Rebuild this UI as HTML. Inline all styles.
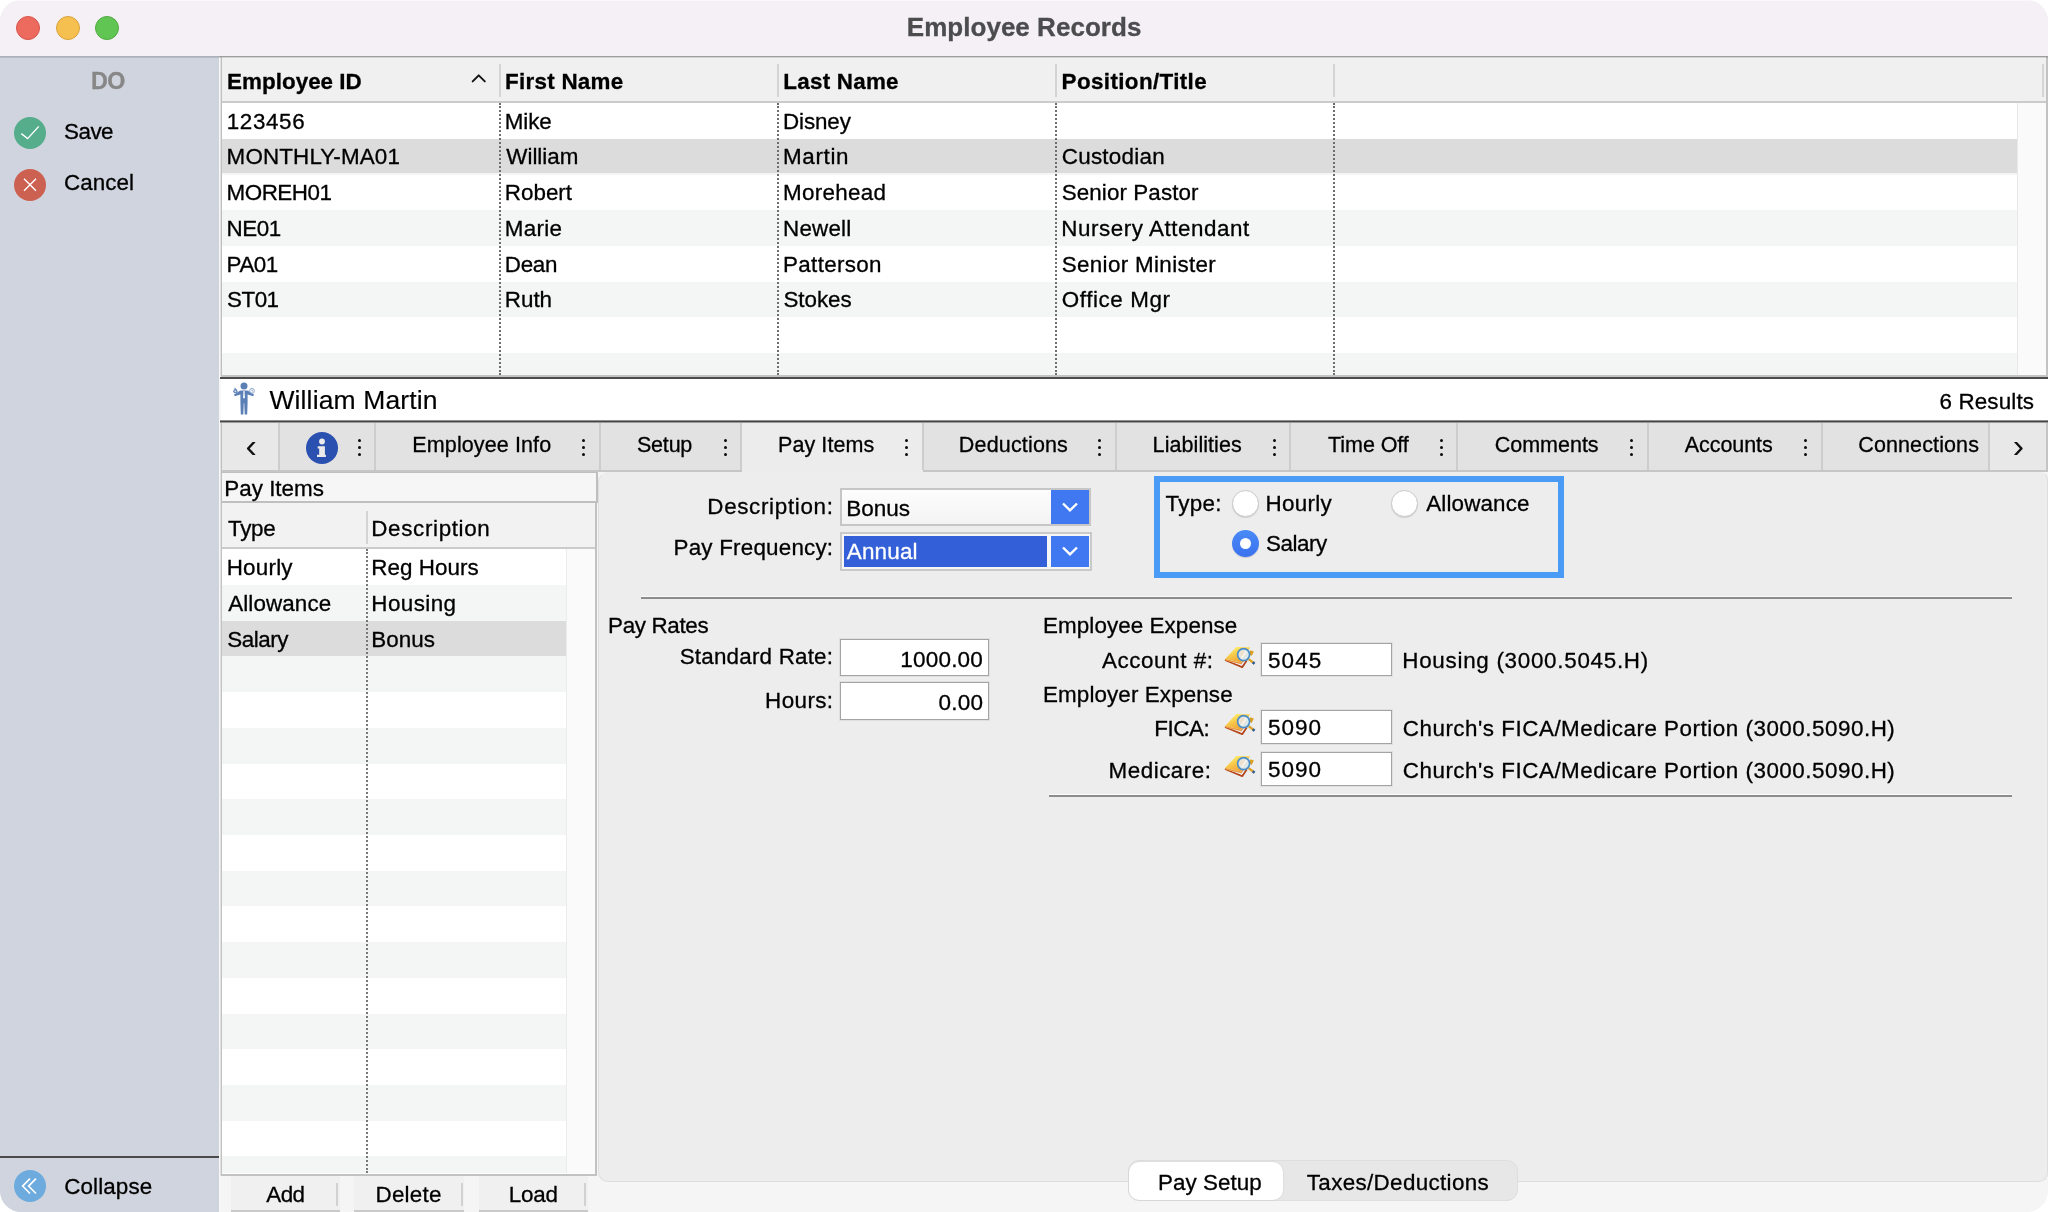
<!DOCTYPE html>
<html><head><meta charset="utf-8"><title>Employee Records</title>
<style>
html,body{margin:0;padding:0;}
body{width:2048px;height:1212px;background:#fff;overflow:hidden;font-family:"Liberation Sans",sans-serif;color:#000;}
.win{will-change:transform;position:absolute;left:0;top:0;width:2048px;height:1212px;border-radius:21px;overflow:hidden;background:#f5f5f5;}
.a{position:absolute;}
.t{position:absolute;line-height:1;white-space:pre;-webkit-text-stroke:0.3px currentColor;}
.tl{position:absolute;width:24px;height:24px;border-radius:50%;top:15.8px;box-sizing:border-box;}
.row{position:absolute;left:222px;width:1795px;}
.vd{position:absolute;width:0;border-left:2px dotted #6e6e6e;}
.hs{position:absolute;width:2px;background:#d4d4d4;}
.tabsep{position:absolute;top:423px;width:2px;height:47px;background:#cdcdcd;}
.dots{position:absolute;width:3.2px;height:3.2px;border-radius:50%;background:#0a0a0a;}
.inp{position:absolute;background:#fff;border:1px solid #a4a4a4;box-sizing:border-box;box-shadow:0 0 0 1px rgba(0,0,0,.06);}
.prow{position:absolute;left:222px;width:344px;}
</style></head><body>
<div class="win">
<!-- title bar -->
<div class="a" style="left:0;top:0;width:2048px;height:56px;background:#f5f0f6;"></div>
<div class="a" style="left:0;top:0;width:2048px;height:1px;background:#faf8fb;"></div>
<div class="a" style="left:0;top:56px;width:2048px;height:1px;background:#9e9e9e;"></div>
<div class="tl" style="left:16px;background:#ed6a5e;border:1px solid #d8544b;"></div>
<div class="tl" style="left:55.6px;background:#f5c04f;border:1px solid #d9a33a;"></div>
<div class="tl" style="left:95px;background:#61c554;border:1px solid #51a941;"></div>
<!-- sidebar -->
<div class="a" style="left:0;top:57px;width:219px;height:1155px;background:#d0d4de;"></div>
<div class="a" style="left:0;top:56px;width:219px;height:1px;background:#aab0bb;"></div>
<div class="a" style="left:219px;top:57px;width:2px;height:1155px;background:#f7f7f8;"></div>
<div class="a" style="left:0;top:1156px;width:219px;height:2px;background:#4a4a4a;"></div>
<svg class="a" style="left:14px;top:117px" width="32" height="32" viewBox="0 0 32 32"><circle cx="16" cy="16" r="16" fill="#55ad8c"/><path d="M7.3 16.6 L13.6 21.6 L24.8 9.4" fill="none" stroke="#fff" stroke-width="1.4"/></svg>
<svg class="a" style="left:14px;top:168.7px" width="32" height="32" viewBox="0 0 32 32"><circle cx="16" cy="16" r="16" fill="#cc6152"/><path d="M10 9.8 L22 21.8 M22 9.8 L10 21.8" fill="none" stroke="#fff" stroke-width="1.4"/></svg>
<svg class="a" style="left:14px;top:1170px" width="32" height="32" viewBox="0 0 32 32"><circle cx="16" cy="16" r="16" fill="#6dabdf"/><path d="M16 8.6 L8.6 16.1 L16 23.5 M22 8.6 L14.6 16.1 L22 23.5" fill="none" stroke="#fff" stroke-width="1.6"/></svg>

<!-- main table -->
<div class="a" style="left:221px;top:57px;width:1827px;height:319px;background:#fff;"></div>
<div class="a" style="left:220px;top:57px;width:1px;height:319px;background:#e2e2e2;"></div><div class="a" style="left:221px;top:57px;width:1px;height:319px;background:#c0c0c0;"></div>
<div class="a" style="left:222px;top:57px;width:1824px;height:44px;background:#f0f0f0;"></div>
<div class="a" style="left:222px;top:101px;width:1824px;height:2px;background:#cbcbcb;"></div>
<div class="a" style="left:2046px;top:57px;width:2px;height:320px;background:#c2c2c2;"></div>
<!-- rows -->
<div class="row" style="top:139px;height:36px;background:#f4f5f5;"></div>
<div class="row" style="top:139px;height:34px;background:#dcdcdc;"></div>
<div class="row" style="top:210px;height:36px;background:#f4f5f5;"></div>
<div class="row" style="top:282px;height:35px;background:#f4f5f5;"></div>
<div class="row" style="top:353px;height:22px;background:#f4f5f5;"></div>
<!-- scrollbar track -->
<div class="a" style="left:2017px;top:103px;width:29px;height:272px;background:#fafafa;"></div>
<div class="a" style="left:2017px;top:103px;width:1px;height:272px;background:#e8e8e8;"></div>
<!-- header separators -->
<div class="hs" style="left:499px;top:64px;height:33px;"></div>
<div class="hs" style="left:777px;top:64px;height:33px;"></div>
<div class="hs" style="left:1055px;top:64px;height:33px;"></div>
<div class="hs" style="left:1333px;top:64px;height:33px;"></div>
<div class="hs" style="left:2042px;top:64px;height:33px;"></div>
<!-- dotted col lines -->
<div class="vd" style="left:499px;top:103px;height:272px;"></div>
<div class="vd" style="left:777px;top:103px;height:272px;"></div>
<div class="vd" style="left:1055px;top:103px;height:272px;"></div>
<div class="vd" style="left:1333px;top:103px;height:272px;"></div>
<!-- sort arrow -->
<svg class="a" style="left:470px;top:72.4px" width="18" height="12" viewBox="0 0 18 12"><path d="M2.7 9.4 L8.7 3.4 L14.8 9.4" fill="none" stroke="#141414" stroke-width="2" stroke-linecap="round" stroke-linejoin="round"/></svg>
<!-- table bottom line -->
<div class="a" style="left:221px;top:375px;width:1827px;height:2px;background:#c4c4c4;"></div>
<div class="a" style="left:220px;top:377px;width:1828px;height:2px;background:#4c4c4c;"></div>
<!-- name bar -->
<div class="a" style="left:221px;top:379px;width:1827px;height:42px;background:#fff;"></div>
<div class="a" style="left:220px;top:420px;width:1828px;height:1px;background:#8f8f8f;"></div>
<div class="a" style="left:220px;top:421px;width:1828px;height:1px;background:#454545;"></div>
<div class="a" style="left:220px;top:422px;width:1828px;height:1px;background:#9a9a9a;"></div>
<!-- person icon -->
<svg class="a" style="left:231px;top:381px" width="26" height="36" viewBox="0 0 26 36">
<circle cx="13" cy="5" r="3.5" fill="#5c80b6"/>
<path d="M10 9.6 H16 Q17.2 9.6 18.6 10.8 L23 13.6 L22.2 15.2 L16.6 13.4 V21 L16.2 33.6 H13.7 L13.2 22 H12.8 L12.3 33.6 H9.8 L9.4 21 V13.4 L3.8 15.2 L3 13.6 L7.4 10.8 Q8.8 9.6 10 9.6Z" fill="#5c80b6"/>
<path d="M12.4 10 H13.6 L14 16.4 L13 17.8 L12 16.4Z" fill="#e8eef6"/>
<circle cx="4.4" cy="10.2" r="2.1" fill="#5c80b6"/><circle cx="4.4" cy="10.2" r="1" fill="#cfd9ea"/>
<path d="M3.4 7.2 L5.4 8.4" stroke="#5c80b6" stroke-width="1"/>
<circle cx="21" cy="9.8" r="2.4" fill="#eef2f8" stroke="#8ea6cc" stroke-width="0.9"/>
<path d="M21 8.6 V9.9 H22" stroke="#8ea6cc" stroke-width="0.7" fill="none"/>
</svg>
<!-- tab bar -->
<div class="a" style="left:221px;top:423px;width:1827px;height:47px;background:#e2e2e2;"></div>
<div class="a" style="left:221px;top:470px;width:1827px;height:2px;background:#c6c6c6;"></div>
<div class="a" style="left:221px;top:423px;width:58px;height:47px;background:#e8e8e8;"></div>
<div class="a" style="left:1990px;top:423px;width:56px;height:47px;background:#e8e8e8;"></div>
<div class="a" style="left:742px;top:423px;width:181px;height:49px;background:#ececec;"></div>
<div class="tabsep" style="left:278px;"></div>
<div class="tabsep" style="left:374px;"></div>
<div class="tabsep" style="left:599px;"></div>
<div class="tabsep" style="left:740px;"></div>
<div class="tabsep" style="left:922px;"></div>
<div class="tabsep" style="left:1115px;"></div>
<div class="tabsep" style="left:1289px;"></div>
<div class="tabsep" style="left:1456px;"></div>
<div class="tabsep" style="left:1647px;"></div>
<div class="tabsep" style="left:1821px;"></div>
<div class="tabsep" style="left:1988px;"></div>
<div class="a" style="left:220px;top:423px;width:1px;height:753px;background:#e2e2e2;"></div><div class="a" style="left:221px;top:423px;width:1px;height:753px;background:#c0c0c0;"></div>
<div class="a" style="left:2046px;top:423px;width:2px;height:47px;background:#c4c4c4;"></div>
<!-- info icon -->
<svg class="a" style="left:306px;top:432px" width="32" height="32" viewBox="0 0 32 32"><circle cx="16" cy="16" r="16" fill="#2a51b0"/><circle cx="16" cy="9.5" r="2.9" fill="#ebebeb"/><path d="M11.7 14.2 H18.9 V22.7 H19.9 V24.9 H11 V22.7 H13.2 V16.4 H11.7Z" fill="#ebebeb"/></svg>
<div class="dots" style="left:358.0px;top:438.8px;"></div>
<div class="dots" style="left:358.0px;top:446.0px;"></div>
<div class="dots" style="left:358.0px;top:453.2px;"></div>
<div class="dots" style="left:581.75px;top:438.8px;"></div>
<div class="dots" style="left:581.75px;top:446.0px;"></div>
<div class="dots" style="left:581.75px;top:453.2px;"></div>
<div class="dots" style="left:723.5px;top:438.8px;"></div>
<div class="dots" style="left:723.5px;top:446.0px;"></div>
<div class="dots" style="left:723.5px;top:453.2px;"></div>
<div class="dots" style="left:904.75px;top:438.8px;"></div>
<div class="dots" style="left:904.75px;top:446.0px;"></div>
<div class="dots" style="left:904.75px;top:453.2px;"></div>
<div class="dots" style="left:1097.5px;top:438.8px;"></div>
<div class="dots" style="left:1097.5px;top:446.0px;"></div>
<div class="dots" style="left:1097.5px;top:453.2px;"></div>
<div class="dots" style="left:1272.75px;top:438.8px;"></div>
<div class="dots" style="left:1272.75px;top:446.0px;"></div>
<div class="dots" style="left:1272.75px;top:453.2px;"></div>
<div class="dots" style="left:1439.75px;top:438.8px;"></div>
<div class="dots" style="left:1439.75px;top:446.0px;"></div>
<div class="dots" style="left:1439.75px;top:453.2px;"></div>
<div class="dots" style="left:1629.5px;top:438.8px;"></div>
<div class="dots" style="left:1629.5px;top:446.0px;"></div>
<div class="dots" style="left:1629.5px;top:453.2px;"></div>
<div class="dots" style="left:1804.0px;top:438.8px;"></div>
<div class="dots" style="left:1804.0px;top:446.0px;"></div>
<div class="dots" style="left:1804.0px;top:453.2px;"></div>
<!-- content panel -->
<div class="a" style="left:598px;top:472px;width:1450px;height:710px;background:#ededed;border-radius:10px 8px 9px 10px;box-sizing:border-box;border:1px solid #dedede;border-top-color:#ededed;"></div>
<!-- left pay items panel -->
<div class="a" style="left:221px;top:472px;width:377px;height:31px;background:#f6f6f6;border:1px solid #bfbfbf;border-width:1px 2px 2px 1px;box-sizing:border-box;"></div>
<div class="a" style="left:221px;top:503px;width:376px;height:673px;background:#fff;border:1px solid #c2c2c2;border-width:0 2px 2px 1px;box-sizing:border-box;"></div>
<div class="a" style="left:222px;top:503px;width:373px;height:44px;background:#f2f2f2;"></div>
<div class="a" style="left:222px;top:547px;width:373px;height:2px;background:#cbcbcb;"></div>
<div class="hs" style="left:366px;top:511px;height:33px;"></div>
<div class="prow" style="top:585px;height:36px;background:#f4f5f5;"></div>
<div class="prow" style="top:621px;height:35px;background:#dcdcdc;"></div>
<div class="prow" style="top:656px;height:36px;background:#f4f5f5;"></div>
<div class="prow" style="top:728px;height:36px;background:#f4f5f5;"></div>
<div class="prow" style="top:799px;height:36px;background:#f4f5f5;"></div>
<div class="prow" style="top:871px;height:35px;background:#f4f5f5;"></div>
<div class="prow" style="top:942px;height:36px;background:#f4f5f5;"></div>
<div class="prow" style="top:1014px;height:35px;background:#f4f5f5;"></div>
<div class="prow" style="top:1085px;height:36px;background:#f4f5f5;"></div>
<div class="prow" style="top:1156px;height:17px;background:#f4f5f5;"></div>
<div class="a" style="left:566px;top:549px;width:29px;height:624px;background:#fafafa;"></div>
<div class="a" style="left:566px;top:549px;width:1px;height:624px;background:#ececec;"></div>
<div class="vd" style="left:366px;top:549px;height:624px;border-left-color:#777;"></div>
<!-- buttons -->
<div class="a" style="left:231px;top:1176px;width:109px;height:34px;background:#f0f0f0;"></div>
<div class="a" style="left:231px;top:1210px;width:109px;height:2px;background:#cacaca;"></div>
<div class="a" style="left:336px;top:1183px;width:2px;height:23px;background:#d2d2d2;"></div>
<div class="a" style="left:354px;top:1176px;width:110px;height:34px;background:#f0f0f0;"></div>
<div class="a" style="left:354px;top:1210px;width:110px;height:2px;background:#cacaca;"></div>
<div class="a" style="left:461px;top:1183px;width:2px;height:23px;background:#d2d2d2;"></div>
<div class="a" style="left:479px;top:1176px;width:109px;height:34px;background:#f0f0f0;"></div>
<div class="a" style="left:479px;top:1210px;width:109px;height:2px;background:#cacaca;"></div>
<div class="a" style="left:584px;top:1183px;width:2px;height:23px;background:#d2d2d2;"></div>
<!-- form: combos -->
<div class="a" style="left:840px;top:488px;width:251px;height:38px;box-sizing:border-box;border:2px solid #c6c6c6;background:linear-gradient(#fdfdfd,#f3f3f3);"></div>
<div class="a" style="left:1051px;top:490px;width:38px;height:34px;background:#3f78f0;"></div>
<svg class="a" style="left:1059px;top:500px" width="22" height="14" viewBox="0 0 22 14"><path d="M4 3.5 L11 10.3 L18 3.5" fill="none" stroke="#fff" stroke-width="2.4"/></svg>
<div class="a" style="left:840px;top:532px;width:252px;height:39px;box-sizing:border-box;border:2px solid #c9c9c9;background:#f6f6f6;"></div>
<div class="a" style="left:844px;top:536px;width:203px;height:31px;background:#3360d8;"></div>
<div class="a" style="left:1051px;top:536px;width:38px;height:31px;background:#3f78f0;"></div>
<svg class="a" style="left:1059px;top:544px" width="22" height="14" viewBox="0 0 22 14"><path d="M4 3.5 L11 10.3 L18 3.5" fill="none" stroke="#fff" stroke-width="2.4"/></svg>
<!-- focus rect -->
<div class="a" style="left:1154px;top:476px;width:410px;height:102px;box-sizing:border-box;border:6px solid #4a9bf6;"></div>
<!-- radios -->
<div class="a" style="left:1232px;top:490.3px;width:27px;height:27px;border-radius:50%;box-sizing:border-box;background:#fff;border:1px solid #c9c9c9;box-shadow:0 1px 1px rgba(0,0,0,.12);"></div>
<div class="a" style="left:1391px;top:490.3px;width:27px;height:27px;border-radius:50%;box-sizing:border-box;background:#fff;border:1px solid #c9c9c9;box-shadow:0 1px 1px rgba(0,0,0,.12);"></div>
<div class="a" style="left:1232px;top:530px;width:27px;height:27px;border-radius:50%;box-sizing:border-box;background:linear-gradient(#4a8af7,#3a72ee);box-shadow:0 1px 1px rgba(0,0,0,.15);"></div>
<div class="a" style="left:1239.7px;top:537.7px;width:11.6px;height:11.6px;border-radius:50%;background:#fff;"></div>
<!-- hr lines -->
<div class="a" style="left:641px;top:596px;width:1371px;height:1px;background:#fafafa;"></div>
<div class="a" style="left:641px;top:597px;width:1371px;height:2px;background:#8c8c8c;"></div>
<div class="a" style="left:1049px;top:794px;width:963px;height:1px;background:#fafafa;"></div>
<div class="a" style="left:1049px;top:795px;width:963px;height:2px;background:#8c8c8c;"></div>
<!-- inputs -->
<div class="inp" style="left:840px;top:639px;width:149px;height:37px;"></div>
<div class="inp" style="left:840px;top:682px;width:149px;height:38px;"></div>
<div class="inp" style="left:1261px;top:643px;width:131px;height:33px;"></div>
<div class="inp" style="left:1261px;top:710px;width:131px;height:34px;"></div>
<div class="inp" style="left:1261px;top:752px;width:131px;height:34px;"></div>
<svg class="a" width="0" height="0" style="left:0;top:0"><defs>
<linearGradient id="bk" x1="0.2" y1="0" x2="0.8" y2="1"><stop offset="0" stop-color="#fff66e"/><stop offset="0.45" stop-color="#f8c84a"/><stop offset="1" stop-color="#ee9a34"/></linearGradient>
<radialGradient id="gl" cx="0.4" cy="0.45" r="0.7"><stop offset="0" stop-color="#f6dcc0"/><stop offset="0.6" stop-color="#dde9ea"/><stop offset="1" stop-color="#c4e0ee"/></radialGradient>
</defs></svg>
<svg class="a" style="left:1224px;top:645px" width="32" height="24" viewBox="0 0 32 24">
<path d="M26.3 5.2 L29.9 6.5 L27.6 11 L25 9Z" fill="#dba022"/>
<path d="M1 14.8 L18.2 22.1 L22.8 15.2" fill="none" stroke="#b5471b" stroke-width="1.9" stroke-linejoin="round"/>
<path d="M1.8 15 L17.9 20.7 L21.8 15.2 L17 17.6Z" fill="#ece9f6"/>
<path d="M1.1 14 L17 17.4 L21.6 10.4 L22.6 11.4 L17.5 19.2 L1.3 15.4Z" fill="#ea9a3c"/>
<path d="M1.1 14 L12.3 1.9 L26.1 2.3 L17 17.4Z" fill="url(#bk)"/>
<path d="M24.6 14.1 L30.3 18.5" stroke="#dfa326" stroke-width="2.4" fill="none"/>
<path d="M28.7 17.3 L30.6 18.8" stroke="#2f5fa0" stroke-width="2.6" fill="none"/>
<circle cx="19.6" cy="9.6" r="6" fill="url(#gl)" stroke="#4b8dc6" stroke-width="1.7"/>
<path d="M17.6 13 L22.6 6.2" stroke="#fff" stroke-width="1.4" opacity=".7"/>
</svg>
<svg class="a" style="left:1224px;top:712px" width="32" height="24" viewBox="0 0 32 24">
<path d="M26.3 5.2 L29.9 6.5 L27.6 11 L25 9Z" fill="#dba022"/>
<path d="M1 14.8 L18.2 22.1 L22.8 15.2" fill="none" stroke="#b5471b" stroke-width="1.9" stroke-linejoin="round"/>
<path d="M1.8 15 L17.9 20.7 L21.8 15.2 L17 17.6Z" fill="#ece9f6"/>
<path d="M1.1 14 L17 17.4 L21.6 10.4 L22.6 11.4 L17.5 19.2 L1.3 15.4Z" fill="#ea9a3c"/>
<path d="M1.1 14 L12.3 1.9 L26.1 2.3 L17 17.4Z" fill="url(#bk)"/>
<path d="M24.6 14.1 L30.3 18.5" stroke="#dfa326" stroke-width="2.4" fill="none"/>
<path d="M28.7 17.3 L30.6 18.8" stroke="#2f5fa0" stroke-width="2.6" fill="none"/>
<circle cx="19.6" cy="9.6" r="6" fill="url(#gl)" stroke="#4b8dc6" stroke-width="1.7"/>
<path d="M17.6 13 L22.6 6.2" stroke="#fff" stroke-width="1.4" opacity=".7"/>
</svg>
<svg class="a" style="left:1224px;top:754px" width="32" height="24" viewBox="0 0 32 24">
<path d="M26.3 5.2 L29.9 6.5 L27.6 11 L25 9Z" fill="#dba022"/>
<path d="M1 14.8 L18.2 22.1 L22.8 15.2" fill="none" stroke="#b5471b" stroke-width="1.9" stroke-linejoin="round"/>
<path d="M1.8 15 L17.9 20.7 L21.8 15.2 L17 17.6Z" fill="#ece9f6"/>
<path d="M1.1 14 L17 17.4 L21.6 10.4 L22.6 11.4 L17.5 19.2 L1.3 15.4Z" fill="#ea9a3c"/>
<path d="M1.1 14 L12.3 1.9 L26.1 2.3 L17 17.4Z" fill="url(#bk)"/>
<path d="M24.6 14.1 L30.3 18.5" stroke="#dfa326" stroke-width="2.4" fill="none"/>
<path d="M28.7 17.3 L30.6 18.8" stroke="#2f5fa0" stroke-width="2.6" fill="none"/>
<circle cx="19.6" cy="9.6" r="6" fill="url(#gl)" stroke="#4b8dc6" stroke-width="1.7"/>
<path d="M17.6 13 L22.6 6.2" stroke="#fff" stroke-width="1.4" opacity=".7"/>
</svg>
<!-- segmented -->
<div class="a" style="left:1128px;top:1160px;width:390px;height:41px;border-radius:11px;background:#e7e7e7;box-sizing:border-box;border:1px solid #dedede;"></div>
<div class="a" style="left:1129px;top:1162px;width:154px;height:38px;border-radius:10px;background:#fff;box-shadow:0 0 2px rgba(0,0,0,.12);"></div>
<div class="a" style="left:0;top:57px;width:2048px;height:1px;background:rgba(0,0,0,.12);"></div>
<span class="t" style="left:906.8px;top:14px;font-size:26px;letter-spacing:0.03px;font-weight:700;color:#4c4c4e;">Employee Records</span>
<span class="t" style="left:90.94px;top:70px;font-size:23.3px;letter-spacing:-0.5px;font-weight:700;color:#878787;">DO</span>
<span class="t" style="left:64.04px;top:121px;font-size:22.4px;letter-spacing:-0.5px;">Save</span>
<span class="t" style="left:64.06px;top:172px;font-size:22.4px;letter-spacing:0.03px;">Cancel</span>
<span class="t" style="left:64.26px;top:1176px;font-size:22.4px;letter-spacing:0.12px;">Collapse</span>
<span class="t" style="left:227.08px;top:71px;font-size:22.4px;letter-spacing:0.03px;font-weight:700;">Employee ID</span>
<span class="t" style="left:505.08px;top:71px;font-size:22.4px;letter-spacing:0.26px;font-weight:700;">First Name</span>
<span class="t" style="left:783.33px;top:71px;font-size:22.4px;letter-spacing:0.24px;font-weight:700;">Last Name</span>
<span class="t" style="left:1061.58px;top:71px;font-size:22.4px;letter-spacing:0.38px;font-weight:700;">Position/Title</span>
<span class="t" style="left:226.73px;top:111px;font-size:22.4px;letter-spacing:0.63px;">123456</span>
<span class="t" style="left:504.81px;top:111px;font-size:22.4px;letter-spacing:-0.09px;">Mike</span>
<span class="t" style="left:783.06px;top:111px;font-size:22.4px;letter-spacing:-0.13px;">Disney</span>
<span class="t" style="left:226.61px;top:146px;font-size:22.4px;letter-spacing:0.14px;">MONTHLY-MA01</span>
<span class="t" style="left:506.25px;top:146px;font-size:22.4px;letter-spacing:0.01px;">William</span>
<span class="t" style="left:783.06px;top:146px;font-size:22.4px;letter-spacing:0.64px;">Martin</span>
<span class="t" style="left:1061.76px;top:146px;font-size:22.4px;letter-spacing:0.26px;">Custodian</span>
<span class="t" style="left:226.61px;top:182px;font-size:22.4px;letter-spacing:-0.5px;">MOREH01</span>
<span class="t" style="left:504.81px;top:182px;font-size:22.4px;letter-spacing:0.01px;">Robert</span>
<span class="t" style="left:783.06px;top:182px;font-size:22.4px;letter-spacing:0.3px;">Morehead</span>
<span class="t" style="left:1061.74px;top:182px;font-size:22.4px;letter-spacing:0.09px;">Senior Pastor</span>
<span class="t" style="left:226.61px;top:218px;font-size:22.4px;letter-spacing:-0.5px;">NE01</span>
<span class="t" style="left:504.81px;top:218px;font-size:22.4px;letter-spacing:0.29px;">Marie</span>
<span class="t" style="left:783.06px;top:218px;font-size:22.4px;letter-spacing:0.19px;">Newell</span>
<span class="t" style="left:1061.31px;top:218px;font-size:22.4px;letter-spacing:0.54px;">Nursery Attendant</span>
<span class="t" style="left:226.61px;top:254px;font-size:22.4px;letter-spacing:-0.5px;">PA01</span>
<span class="t" style="left:504.81px;top:254px;font-size:22.4px;letter-spacing:-0.29px;">Dean</span>
<span class="t" style="left:783.06px;top:254px;font-size:22.4px;letter-spacing:0.33px;">Patterson</span>
<span class="t" style="left:1061.74px;top:254px;font-size:22.4px;letter-spacing:0.34px;">Senior Minister</span>
<span class="t" style="left:227.04px;top:289px;font-size:22.4px;letter-spacing:-0.5px;">ST01</span>
<span class="t" style="left:504.81px;top:289px;font-size:22.4px;letter-spacing:-0.02px;">Ruth</span>
<span class="t" style="left:783.49px;top:289px;font-size:22.4px;letter-spacing:-0.07px;">Stokes</span>
<span class="t" style="left:1061.81px;top:289px;font-size:22.4px;letter-spacing:0.59px;">Office Mgr</span>
<span class="t" style="left:269.42px;top:387px;font-size:26.5px;letter-spacing:0.14px;-webkit-text-stroke-width:0.15px;">William Martin</span>
<span class="t" style="left:1939.51px;top:391px;font-size:22.4px;letter-spacing:0.14px;">6 Results</span>
<span class="t" style="left:412.37px;top:435px;font-size:21.5px;letter-spacing:0.11px;">Employee Info</span>
<span class="t" style="left:636.99px;top:435px;font-size:21.5px;letter-spacing:-0.21px;">Setup</span>
<span class="t" style="left:778.12px;top:435px;font-size:21.5px;letter-spacing:0.06px;">Pay Items</span>
<span class="t" style="left:958.87px;top:435px;font-size:21.5px;letter-spacing:0.16px;">Deductions</span>
<span class="t" style="left:1152.62px;top:435px;font-size:21.5px;letter-spacing:0.07px;">Liabilities</span>
<span class="t" style="left:1328.09px;top:435px;font-size:21.5px;letter-spacing:-0.07px;">Time Off</span>
<span class="t" style="left:1494.79px;top:435px;font-size:21.5px;letter-spacing:-0.02px;">Comments</span>
<span class="t" style="left:1684.75px;top:435px;font-size:21.5px;letter-spacing:-0.06px;">Accounts</span>
<span class="t" style="left:1858.29px;top:435px;font-size:21.5px;letter-spacing:0.11px;">Connections</span>
<span class="t" style="left:224.31px;top:478px;font-size:22.4px;letter-spacing:0.01px;">Pay Items</span>
<span class="t" style="left:227.98px;top:518px;font-size:22.4px;letter-spacing:-0.27px;">Type</span>
<span class="t" style="left:371.31px;top:518px;font-size:22.4px;letter-spacing:0.65px;">Description</span>
<span class="t" style="left:226.71px;top:557px;font-size:22.4px;letter-spacing:0.23px;">Hourly</span>
<span class="t" style="left:371.31px;top:557px;font-size:22.4px;letter-spacing:0.06px;">Reg Hours</span>
<span class="t" style="left:228.14px;top:593px;font-size:22.4px;letter-spacing:0.13px;">Allowance</span>
<span class="t" style="left:371.31px;top:593px;font-size:22.4px;letter-spacing:0.43px;">Housing</span>
<span class="t" style="left:227.14px;top:629px;font-size:22.4px;letter-spacing:-0.42px;">Salary</span>
<span class="t" style="left:371.3px;top:629px;font-size:22.4px;letter-spacing:0.02px;">Bonus</span>
<span class="t" style="left:707.31px;top:496px;font-size:22.4px;letter-spacing:0.67px;">Description:</span>
<span class="t" style="left:673.56px;top:537px;font-size:22.4px;letter-spacing:0.21px;">Pay Frequency:</span>
<span class="t" style="left:846.3px;top:498px;font-size:22.5px;letter-spacing:-0.03px;">Bonus</span>
<span class="t" style="left:846.84px;top:541px;font-size:22.5px;letter-spacing:0.13px;color:#fff;">Annual</span>
<span class="t" style="left:1165.58px;top:493px;font-size:22.4px;letter-spacing:0.3px;">Type:</span>
<span class="t" style="left:1265.56px;top:493px;font-size:22.4px;letter-spacing:0.28px;">Hourly</span>
<span class="t" style="left:1426.24px;top:493px;font-size:22.4px;letter-spacing:0.15px;">Allowance</span>
<span class="t" style="left:1265.99px;top:533px;font-size:22.4px;letter-spacing:-0.47px;">Salary</span>
<span class="t" style="left:608.06px;top:615px;font-size:22.4px;letter-spacing:-0.34px;">Pay Rates</span>
<span class="t" style="left:679.74px;top:646px;font-size:22.4px;letter-spacing:0.2px;">Standard Rate:</span>
<span class="t" style="left:900.16px;top:649px;font-size:22.5px;letter-spacing:0.23px;">1000.00</span>
<span class="t" style="left:765.06px;top:690px;font-size:22.4px;letter-spacing:0.42px;">Hours:</span>
<span class="t" style="left:938.48px;top:692px;font-size:22.5px;letter-spacing:0.25px;">0.00</span>
<span class="t" style="left:1043.06px;top:615px;font-size:22.4px;letter-spacing:0.08px;">Employee Expense</span>
<span class="t" style="left:1101.99px;top:650px;font-size:22.4px;letter-spacing:0.59px;">Account #:</span>
<span class="t" style="left:1268.04px;top:650px;font-size:22.5px;letter-spacing:1.05px;">5045</span>
<span class="t" style="left:1402.31px;top:650px;font-size:22.4px;letter-spacing:0.72px;">Housing (3000.5045.H)</span>
<span class="t" style="left:1043.06px;top:684px;font-size:22.4px;letter-spacing:0.11px;">Employer Expense</span>
<span class="t" style="left:1154.31px;top:718px;font-size:22.4px;letter-spacing:-0.47px;">FICA:</span>
<span class="t" style="left:1268.04px;top:717px;font-size:22.5px;letter-spacing:0.99px;">5090</span>
<span class="t" style="left:1402.76px;top:718px;font-size:22.4px;letter-spacing:0.52px;">Church's FICA/Medicare Portion (3000.5090.H)</span>
<span class="t" style="left:1108.56px;top:760px;font-size:22.4px;letter-spacing:0.52px;">Medicare:</span>
<span class="t" style="left:1268.04px;top:759px;font-size:22.5px;letter-spacing:0.99px;">5090</span>
<span class="t" style="left:1402.76px;top:760px;font-size:22.4px;letter-spacing:0.52px;">Church's FICA/Medicare Portion (3000.5090.H)</span>
<span class="t" style="left:266.24px;top:1184px;font-size:22.4px;letter-spacing:-0.5px;">Add</span>
<span class="t" style="left:375.56px;top:1184px;font-size:22.4px;letter-spacing:0.22px;">Delete</span>
<span class="t" style="left:508.81px;top:1184px;font-size:22.4px;letter-spacing:-0.23px;">Load</span>
<span class="t" style="left:1158.06px;top:1172px;font-size:22.4px;letter-spacing:0.04px;">Pay Setup</span>
<span class="t" style="left:1306.83px;top:1172px;font-size:22.4px;letter-spacing:0.34px;">Taxes/Deductions</span>
<span class="t" style="left:245.42px;top:428px;font-size:34px;letter-spacing:-0.5px;color:#111;-webkit-text-stroke-width:0px;">‹</span>
<span class="t" style="left:2012.79px;top:428px;font-size:34px;letter-spacing:-0.5px;color:#111;-webkit-text-stroke-width:0px;">›</span>
</div>
</body></html>
